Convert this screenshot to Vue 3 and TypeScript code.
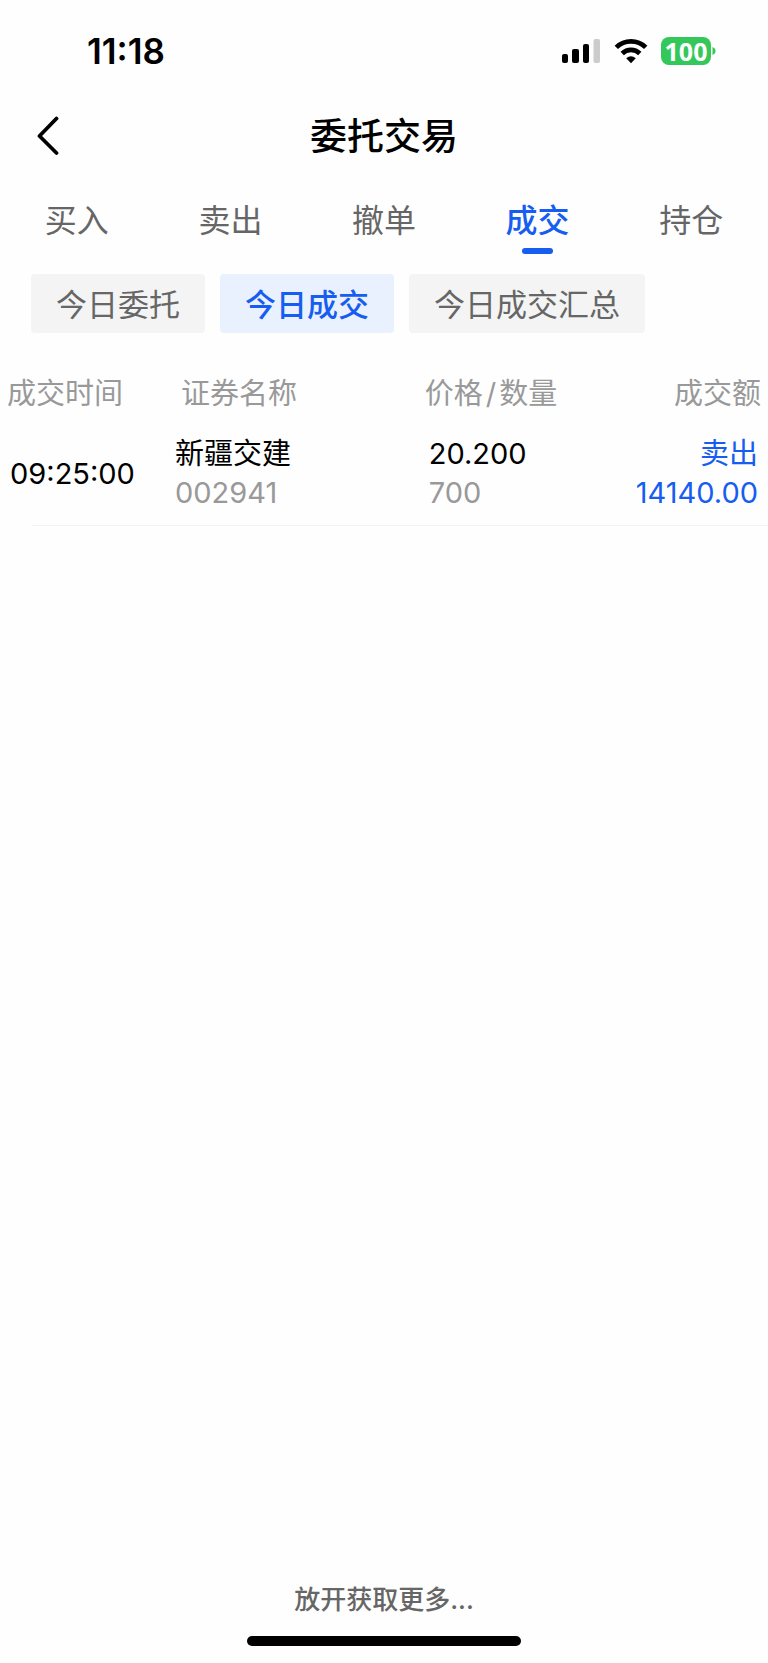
<script setup lang="ts">
import { ref } from 'vue'

interface Trade {
  time: string
  name: string
  code: string
  price: string
  quantity: string
  side: string
  amount: string
}

const tabs: string[] = ['买入', '卖出', '撤单', '成交', '持仓']
const filters: string[] = ['今日委托', '今日成交', '今日成交汇总']
const activeTab = ref('成交')
const activeFilter = ref('今日成交')

const trades: Trade[] = [
  {
    time: '09:25:00',
    name: '新疆交建',
    code: '002941',
    price: '20.200',
    quantity: '700',
    side: '卖出',
    amount: '14140.00',
  },
]
</script>

<template>
  <div class="screen">
    <div class="status">
      <span class="clock">11:18</span>
      <div class="indicators">
        <svg class="signal" width="40" height="26" viewBox="0 0 40 26" aria-hidden="true">
          <rect x="1" y="16" width="6" height="9" rx="2" />
          <rect x="11" y="11" width="7" height="14" rx="2" />
          <rect x="22" y="6" width="6" height="19" rx="2" />
          <rect x="32.5" y="1" width="6.5" height="24" rx="2" fill="#cccccc" />
        </svg>
        <svg class="wifi" width="34" height="26" viewBox="0 0 34 26" aria-hidden="true">
          <path d="M2.3 9.4 A21 21 0 0 1 31.7 9.4" fill="none" stroke="#000" stroke-width="4.8" />
          <path d="M8.2 15.5 A12.6 12.6 0 0 1 25.8 15.5" fill="none" stroke="#000" stroke-width="4.7" />
          <path d="M17 25.2 L12.2 20.3 Q17 16.2 21.8 20.3 Z" />
        </svg>
        <div class="battery">
          <span class="level">100</span>
          <svg width="4" height="8" viewBox="0 0 4 8" aria-hidden="true">
            <path d="M0.5 0 Q3.5 1.2 3.5 4 Q3.5 6.8 0.5 8 Z" fill="#34c759" />
          </svg>
        </div>
      </div>
    </div>

    <header class="bar">
      <button class="back" type="button" aria-label="返回">
        <svg width="24" height="40" viewBox="0 0 24 40" aria-hidden="true">
          <path
            d="M20.5 2.5 L3.5 20 L20.5 37"
            fill="none"
            stroke="#000"
            stroke-width="3.8"
            stroke-linecap="round"
            stroke-linejoin="round"
          />
        </svg>
      </button>
      <h1>委托交易</h1>
    </header>

    <nav class="tabs">
      <button
        v-for="tab in tabs"
        :key="tab"
        type="button"
        :class="['tab', { active: tab === activeTab }]"
        @click="activeTab = tab"
      >
        {{ tab }}
      </button>
    </nav>

    <div class="filters">
      <button
        v-for="filter in filters"
        :key="filter"
        type="button"
        :class="['filter', { active: filter === activeFilter }]"
        @click="activeFilter = filter"
      >
        {{ filter }}
      </button>
    </div>

    <table>
      <colgroup>
        <col class="col-time" />
        <col class="col-name" />
        <col class="col-price" />
        <col />
      </colgroup>
      <thead>
        <tr>
          <th scope="col">成交时间</th>
          <th scope="col">证券名称</th>
          <th scope="col">价格<span class="slash">/</span>数量</th>
          <th scope="col">成交额</th>
        </tr>
      </thead>
      <tbody>
        <tr v-for="trade in trades" :key="trade.time + trade.code">
          <td>{{ trade.time }}</td>
          <td>
            <div>{{ trade.name }}</div>
            <div class="muted">{{ trade.code }}</div>
          </td>
          <td>
            <div>{{ trade.price }}</div>
            <div class="muted">{{ trade.quantity }}</div>
          </td>
          <td class="sell">
            <div>{{ trade.side }}</div>
            <div>{{ trade.amount }}</div>
          </td>
        </tr>
      </tbody>
    </table>
    <div class="divider"></div>

    <footer>
      <p>放开获取更多...</p>
      <div class="home"></div>
    </footer>
  </div>
</template>

<style>
body {
  margin: 0;
  background: #fefefe;
}
</style>

<style scoped>
.screen {
  display: flex;
  flex-direction: column;
  min-height: 100vh;
  background: #fefefe;
  color: #000;
  font-family: Inter, 'Noto Sans CJK SC', sans-serif;
}

button {
  border: 0;
  padding: 0;
  background: none;
  font: inherit;
  color: inherit;
  cursor: pointer;
}

.status {
  display: flex;
  align-items: center;
  justify-content: space-between;
  height: 102px;
  padding: 0 52px 0 87px;
}

.clock {
  font-size: 35px;
  font-weight: 600;
}

.indicators {
  display: flex;
  align-items: center;
  gap: 13px;
}

.battery {
  display: flex;
  align-items: center;
  gap: 1px;
}

.level {
  width: 50px;
  height: 28px;
  border-radius: 8px;
  background: #34c759;
  color: #fff;
  font-family: 'Noto Sans', sans-serif;
  font-size: 25px;
  font-weight: 700;
  line-height: 28px;
  text-align: center;
}

.bar {
  display: grid;
  grid-template-columns: 1fr auto 1fr;
  align-items: center;
  height: 68px;
  padding: 0 36px;
}

.back {
  display: flex;
  justify-self: start;
}

h1 {
  margin: 0;
  padding-top: 2px;
  font-size: 37px;
  font-weight: 500;
  line-height: 48px;
}

.tabs {
  display: flex;
  height: 84px;
  margin-top: 8px;
}

.tab {
  display: flex;
  flex: 1;
  flex-direction: column;
  align-items: center;
  padding-top: 19px;
  color: #666;
  font-size: 32px;
  line-height: 48px;
}

.tab::after {
  content: '';
  width: 31px;
  height: 6px;
  margin-top: 3px;
  border-radius: 3px;
}

.tab.active {
  color: #165df0;
  font-weight: 500;
}

.tab.active::after {
  background: #165df0;
}

.filters {
  display: flex;
  gap: 15px;
  margin-top: 12px;
  padding: 0 31px;
}

.filter {
  height: 59px;
  padding: 0 25px 2px;
  border-radius: 4px;
  background: #f4f4f4;
  color: #666;
  font-size: 31px;
  white-space: nowrap;
}

.filter.active {
  background: #eaf1fe;
  color: #165df0;
  font-weight: 500;
}

table {
  width: 100%;
  margin-top: 38px;
  border-collapse: collapse;
  table-layout: fixed;
  font-size: 29px;
  line-height: 39px;
  white-space: nowrap;
}

.col-time {
  width: 22%;
}

.col-name {
  width: 32%;
}

.col-price {
  width: 23%;
}

th {
  padding: 3px 7px 21px;
  color: #999;
  font-weight: 400;
  text-align: left;
}

th:nth-child(2) {
  padding-left: 12px;
}

th:nth-child(3) {
  padding-left: 10px;
}

.slash {
  margin: 0 3px;
}

td {
  padding: 0 10px 13px;
}

td:nth-child(2) {
  padding-left: 6px;
}

td:nth-child(3) {
  padding-left: 14px;
}

th:last-child,
td:last-child {
  text-align: right;
}

.muted {
  color: #999;
}

.sell {
  color: #165df0;
}

.divider {
  height: 1px;
  margin-left: 32px;
  background: #f2f2f2;
}

footer {
  display: flex;
  flex-direction: column;
  align-items: center;
  gap: 17px;
  margin-top: auto;
  padding-bottom: 17px;
}

footer p {
  margin: 0;
  color: #666;
  font-size: 26px;
  font-weight: 500;
  line-height: 38px;
}

.home {
  width: 274px;
  height: 10px;
  border-radius: 5px;
  background: #000;
}
</style>
